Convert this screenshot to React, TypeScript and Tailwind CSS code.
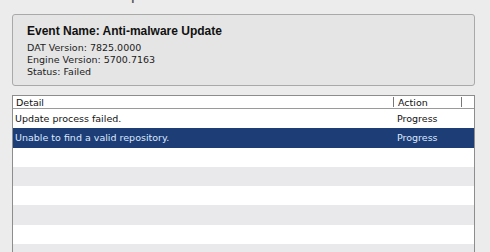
import React from "react";

const rows = [
  { detail: "Update process failed.", action: "Progress" },
  { detail: "Unable to find a valid repository.", action: "Progress", selected: true },
];

const App = () => {
  const empty = Array.from({ length: 6 });

  return (
    <div
      className="w-[490px] h-[252px] overflow-hidden bg-[#ececec] text-[#111]"
      style={{ fontFamily: '"DejaVu Sans", "Liberation Sans", sans-serif' }}
    >
      <div className="h-[14px] overflow-hidden relative">
        <div className="absolute left-[118px] top-[-19px] text-[17px] text-[#555]">Update</div>
      </div>

      <div className="mx-[12px] w-[463px] h-[72px] rounded-[3px] border border-[#a9a9a9] bg-[#e5e5e5] pl-[14px] pt-[8px]">
        <div
          className="text-[12px] font-bold leading-[16px]"
          style={{ fontFamily: '"Liberation Sans", Arial, sans-serif' }}
        >
          Event Name: Anti-malware Update
        </div>
        <div className="mt-[3px] text-[9.5px] leading-[12px] text-[#222]">
          <div>DAT Version: 7825.0000</div>
          <div>Engine Version: 5700.7163</div>
          <div>Status: Failed</div>
        </div>
      </div>

      <div className="mx-[12px] mt-[9px] w-[463px] border-l border-r border-t border-[#8d8d8d] bg-white">
        <div className="flex h-[13px] items-center border-b border-[#9a9a9a] text-[9.5px] leading-[13px]">
          <div className="flex-1 pl-[3px]">Detail</div>
          <div className="w-[68px] border-l border-[#777] pl-[4px] h-[10px] flex items-center">Action</div>
          <div className="w-[13px] border-l border-[#777] h-[10px]" />
        </div>
        {rows.map((r, i) => (
          <div
            key={i}
            className={
              "flex h-[19.25px] items-center text-[9.5px] " +
              (r.selected ? "bg-[#1c3d76] text-[#dde9ff]" : "bg-white")
            }
          >
            <div className="flex-1 pl-[2px]">{r.detail}</div>
            <div className="w-[81px] pl-[4px]">{r.action}</div>
          </div>
        ))}
        {empty.map((_, i) => (
          <div
            key={i}
            className={"h-[19.25px] " + (i % 2 === 1 ? "bg-[#e9e8ea]" : "bg-white")}
          />
        ))}
      </div>
    </div>
  );
};

export default App;
